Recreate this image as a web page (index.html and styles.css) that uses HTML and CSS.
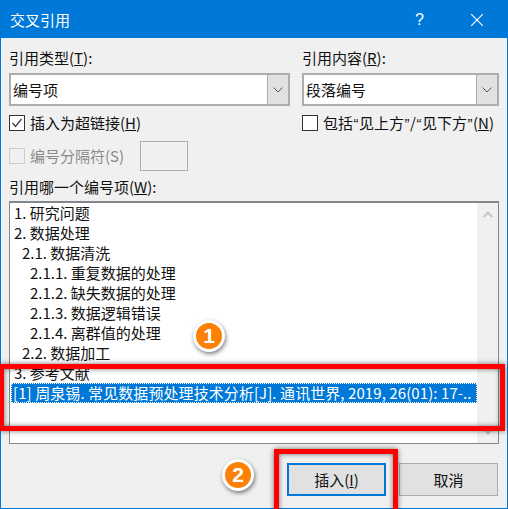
FILE: index.html
```html
<!DOCTYPE html>
<html lang="zh-CN">
<head>
<meta charset="utf-8">
<title>交叉引用</title>
<link rel="stylesheet" href="styles.css">
</head>
<body>
<div class="window">
  <header class="titlebar">
    <span class="title">交叉引用</span>
    <span class="help">?</span>
    <svg class="close" width="12" height="12" viewBox="0 0 12 12"><path d="M0 0L12 12M12 0L0 12" stroke="#fff" stroke-width="1.1" fill="none"/></svg>
  </header>
  <main class="content">
    <div class="columns">
      <div class="col-left">
        <label class="field-label">引用类型(<u>T</u>):</label>
        <div class="combo">
          <span class="combo-text">编号项</span>
          <span class="combo-btn"><svg width="10" height="6" viewBox="0 0 10 6"><path d="M.5.5L5 5L9.5.5" stroke="#555" fill="none"/></svg></span>
        </div>
        <div class="check-row">
          <span class="check checked"><svg width="14" height="14" viewBox="0 0 14 14"><path d="M2.5 7L5.5 10.5L11.5 3" stroke="#444" stroke-width="1.4" fill="none"/></svg></span>
          <span class="check-text">插入为超链接(<u>H</u>)</span>
        </div>
      </div>
      <div class="col-right">
        <label class="field-label">引用内容(<u>R</u>):</label>
        <div class="combo">
          <span class="combo-text">段落编号</span>
          <span class="combo-btn"><svg width="10" height="6" viewBox="0 0 10 6"><path d="M.5.5L5 5L9.5.5" stroke="#555" fill="none"/></svg></span>
        </div>
        <div class="check-row">
          <span class="check"></span>
          <span class="check-text">包括<span class="q">“</span>见上方<span class="q">”</span>/<span class="q">“</span>见下方<span class="q">”</span>(<u>N</u>)</span>
        </div>
      </div>
    </div>
    <div class="sep-row">
      <span class="check disabled"></span>
      <span class="sep-label">编号分隔符(S)</span>
      <span class="sep-input"></span>
    </div>
    <label class="field-label list-label">引用哪一个编号项(<u>W</u>):</label>
    <div class="listbox">
      <ul class="items">
        <li>1. 研究问题</li>
        <li>2. 数据处理</li>
        <li class="l2">2.1. 数据清洗</li>
        <li class="l3">2.1.1. 重复数据的处理</li>
        <li class="l3">2.1.2. 缺失数据的处理</li>
        <li class="l3">2.1.3. 数据逻辑错误</li>
        <li class="l3">2.1.4. 离群值的处理</li>
        <li class="l2">2.2. 数据加工</li>
        <li>3. 参考文献</li>
        <li class="selected">[1] 周泉锡. 常见数据预处理技术分析[J]. 通讯世界, 2019, 26(01): 17-..</li>
      </ul>
      <div class="scrollbar">
        <svg width="10" height="7" viewBox="0 0 10 7"><path d="M.7 6L5 1.5L9.3 6" stroke="#c4c4c4" stroke-width="2" fill="none"/></svg>
        <svg width="10" height="7" viewBox="0 0 10 7"><path d="M.7 1L5 5.5L9.3 1" stroke="#c4c4c4" stroke-width="2" fill="none"/></svg>
      </div>
    </div>
    <div class="actions">
      <button class="btn primary">插入(<u>I</u>)</button>
      <button class="btn">取消</button>
    </div>
  </main>
  <div class="mark mark-list"></div>
  <div class="mark mark-btn"></div>
  <div class="badge badge-1">1</div>
  <div class="badge badge-2">2</div>
</div>
</body>
</html>
```
FILE: styles.css
```css
* { box-sizing: border-box; }
html, body { margin: 0; padding: 0; }
body {
  width: 508px;
  height: 509px;
  overflow: hidden;
  font-family: "Noto Sans CJK SC", "Noto Sans", sans-serif;
  font-size: 15px;
  line-height: 20px;
  color: #111;
}
.window {
  position: relative;
  width: 508px;
  height: 509px;
  background: #f0f0f0;
  border: 1px solid #0078d7;
  display: flex;
  flex-direction: column;
}
.titlebar {
  height: 37px;
  background: #0078d7;
  color: #fff;
  display: flex;
  align-items: center;
  flex: none;
}
.title { margin-left: 9px; flex: 1; }
.help { margin-right: 47px; font-size: 16px; font-family: "Liberation Sans", sans-serif; }
.close { margin-right: 24px; }
.content { padding: 10px 8px 0; flex: 1; }
.columns { display: flex; gap: 12px; }
.col-left { width: 281px; flex: none; }
.col-right { width: 197px; flex: none; }
.field-label { display: block; height: 20px; }
.combo {
  margin-top: 5px;
  height: 33px;
  display: flex;
  background: #fff;
  border: 2px solid #adadad;
}
.combo-text { flex: 1; padding: 5px 0 0 2px; }
.combo-btn {
  width: 21px;
  background: #e1e1e1;
  border-left: 1px solid #adadad;
  display: flex;
  align-items: center;
  justify-content: center;
}
.check-row { margin-top: 7px; display: flex; align-items: center; gap: 5px; height: 20px; }
.check-text { white-space: nowrap; }
.q { font-family: "Liberation Sans", sans-serif; margin: 0 .5px; }
.check {
  width: 16px;
  height: 16px;
  flex: none;
  background: #fff;
  border: 1px solid #333;
  display: flex;
  align-items: center;
  justify-content: center;
}
.check.disabled { border-color: #ccc; background: #f0f0f0; }
.sep-row { margin-top: 8px; height: 30px; display: flex; align-items: center; }
.sep-label { margin-left: 5px; color: #8a8a8a; width: 110px; }
.sep-input { width: 48px; height: 30px; border: 1px solid #adadad; background: #f0f0f0; }
.list-label { margin-top: 6px; }
.listbox {
  margin-top: 4px;
  width: 490px;
  height: 243px;
  display: flex;
  background: #fff;
  border: 1px solid #82878c;
  border-top-width: 2px;
}
.items { list-style: none; margin: 0; padding: 0 0 0 1px; flex: 1; min-width: 0; }
.items li { height: 20px; padding-left: 3px; white-space: nowrap; overflow: hidden; }
.items .l2 { padding-left: 11px; }
.items .l3 { padding-left: 19px; }
.items .selected { background: #0078d7; color: #fff; outline: 1px dotted #fff; outline-offset: -1px; padding-left: 2px; letter-spacing: .08px; }
.scrollbar {
  width: 21px;
  flex: none;
  background: #f0f0f0;
  display: flex;
  flex-direction: column;
  justify-content: space-between;
  align-items: center;
  padding: 8px 0;
}
.actions { margin-top: 19px; display: flex; justify-content: flex-end; gap: 13px; padding-right: 1px; }
.btn {
  width: 99px;
  height: 33px;
  background: #e1e1e1;
  border: 1px solid #adadad;
  font: inherit;
  color: #111;
  padding: 1px 0 0;
}
.btn.primary { border: 2px solid #0078d7; }
.mark {
  position: absolute;
  border: 5px solid #f00;
  box-shadow: 0 0 5px rgba(0,0,0,.55), inset 0 0 5px rgba(0,0,0,.55);
}
.mark-list { left: -2px; top: 363px; width: 506px; height: 67px; }
.mark-btn { left: 273px; top: 448px; width: 124px; height: 70px; }
.badge {
  position: absolute;
  width: 32px;
  height: 32px;
  border-radius: 50%;
  background: #fb8005;
  border: 3px solid #fff;
  box-shadow: 1px 2px 4px rgba(0,0,0,.5);
  color: #fff;
  font-family: "Liberation Sans", sans-serif;
  font-weight: 700;
  font-size: 21px;
  line-height: 26px;
  text-align: center;
}
.badge-1 { left: 192px; top: 319px; }
.badge-2 { left: 221px; top: 458px; }
```
